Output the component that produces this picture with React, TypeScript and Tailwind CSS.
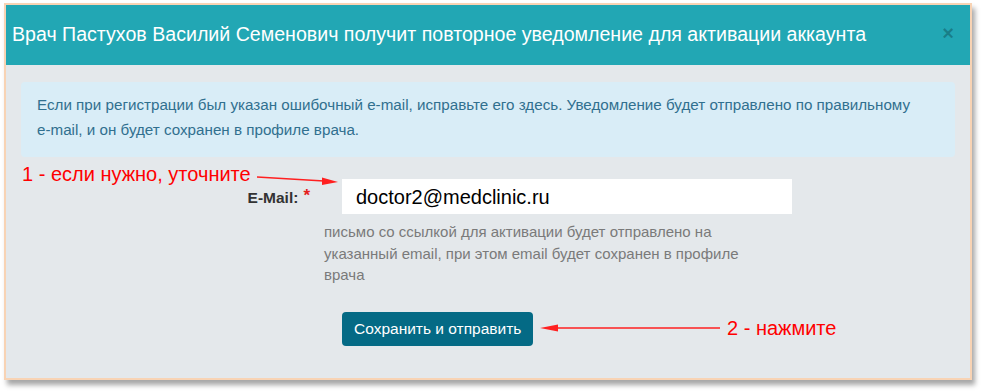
import React from 'react';

const App: React.FC = () => {
  return (
    <div className="min-h-screen bg-white pl-[4px] pt-[3px] font-['Liberation_Sans',Arial,sans-serif]">
      {/* Modal */}
      <div className="relative w-[968px] h-[377px] border-2 border-[#f8d3b4] bg-[#e4e8eb] shadow-[3px_5px_5px_rgba(0,0,0,0.35)] flex flex-col">
        {/* Header */}
        <div className="h-[60px] bg-[#22a7b4] flex items-center justify-between pl-[6px] pr-[16px]">
          <h3 className="text-[19.6px] text-white leading-none">
            Врач Пастухов Василий Семенович получит повторное уведомление для активации аккаунта
          </h3>
          <span className="text-[20px] font-bold text-black/25 leading-none -mt-[4px]">×</span>
        </div>

        {/* Body */}
        <div className="flex-1 px-[15px] pt-[17px]">
          <div className="rounded-[4px] bg-[#d9edf7] text-[#31708f] text-[15.2px] leading-[25px] pl-[16px] pr-[16px] pt-[10px] pb-[15px]">
            Если при регистрации был указан ошибочный <span className="whitespace-nowrap">e-mail,</span> исправьте его здесь. Уведомление будет отправлено по правильному <span className="whitespace-nowrap">e-mail,</span> и он будет сохранен в профиле врача.
          </div>

          <div className="mt-[22px] flex">
            <div className="w-[321px] pr-[32px] flex justify-end items-start pt-[9px]">
              <span className="text-[15.5px] font-bold text-[#333] leading-[20px]">E-Mail:</span>
              <span className="ml-[5px] text-[17px] font-bold text-[#e4201b] leading-[16px]">*</span>
            </div>
            <div className="w-[450px]">
              <div className="h-[35px] bg-white flex items-center pl-[14px] text-[20px] text-black">
                doctor2@medclinic.ru
              </div>
              <p className="mt-[7px] -ml-[18px] w-[458px] text-[15px] leading-[21.5px] text-[#7a7a7a]">
                письмо со ссылкой для активации будет отправлено на указанный email, при этом email будет сохранен в профиле врача
              </p>
            </div>
          </div>

          <div className="mt-[26px] pl-[321px]">
            <button className="h-[34px] px-[12px] rounded-[4px] bg-[#046a85] text-white text-[15.5px]">
              Сохранить и отправить
            </button>
          </div>
        </div>

        {/* Annotations */}
        <span className="absolute left-[16px] top-[157px] text-[20px] leading-[24px] text-[#ff0000]">
          1 - если нужно, уточните
        </span>
        <span className="absolute left-[721px] top-[311px] text-[20px] leading-[24px] text-[#ff0000]">
          2 - нажмите
        </span>
        <svg className="absolute left-0 top-0 pointer-events-none" width="964" height="373">
          <line x1="251" y1="172" x2="318" y2="176" stroke="#ff2020" strokeWidth="1.5" />
          <polygon points="332,177 316,172.5 316,180" fill="#ff2020" />
          <line x1="714" y1="323" x2="550" y2="323" stroke="#ff2020" strokeWidth="1.5" />
          <polygon points="534,323 552,319.5 552,326.5" fill="#ff2020" />
        </svg>
      </div>
    </div>
  );
};

export default App;
